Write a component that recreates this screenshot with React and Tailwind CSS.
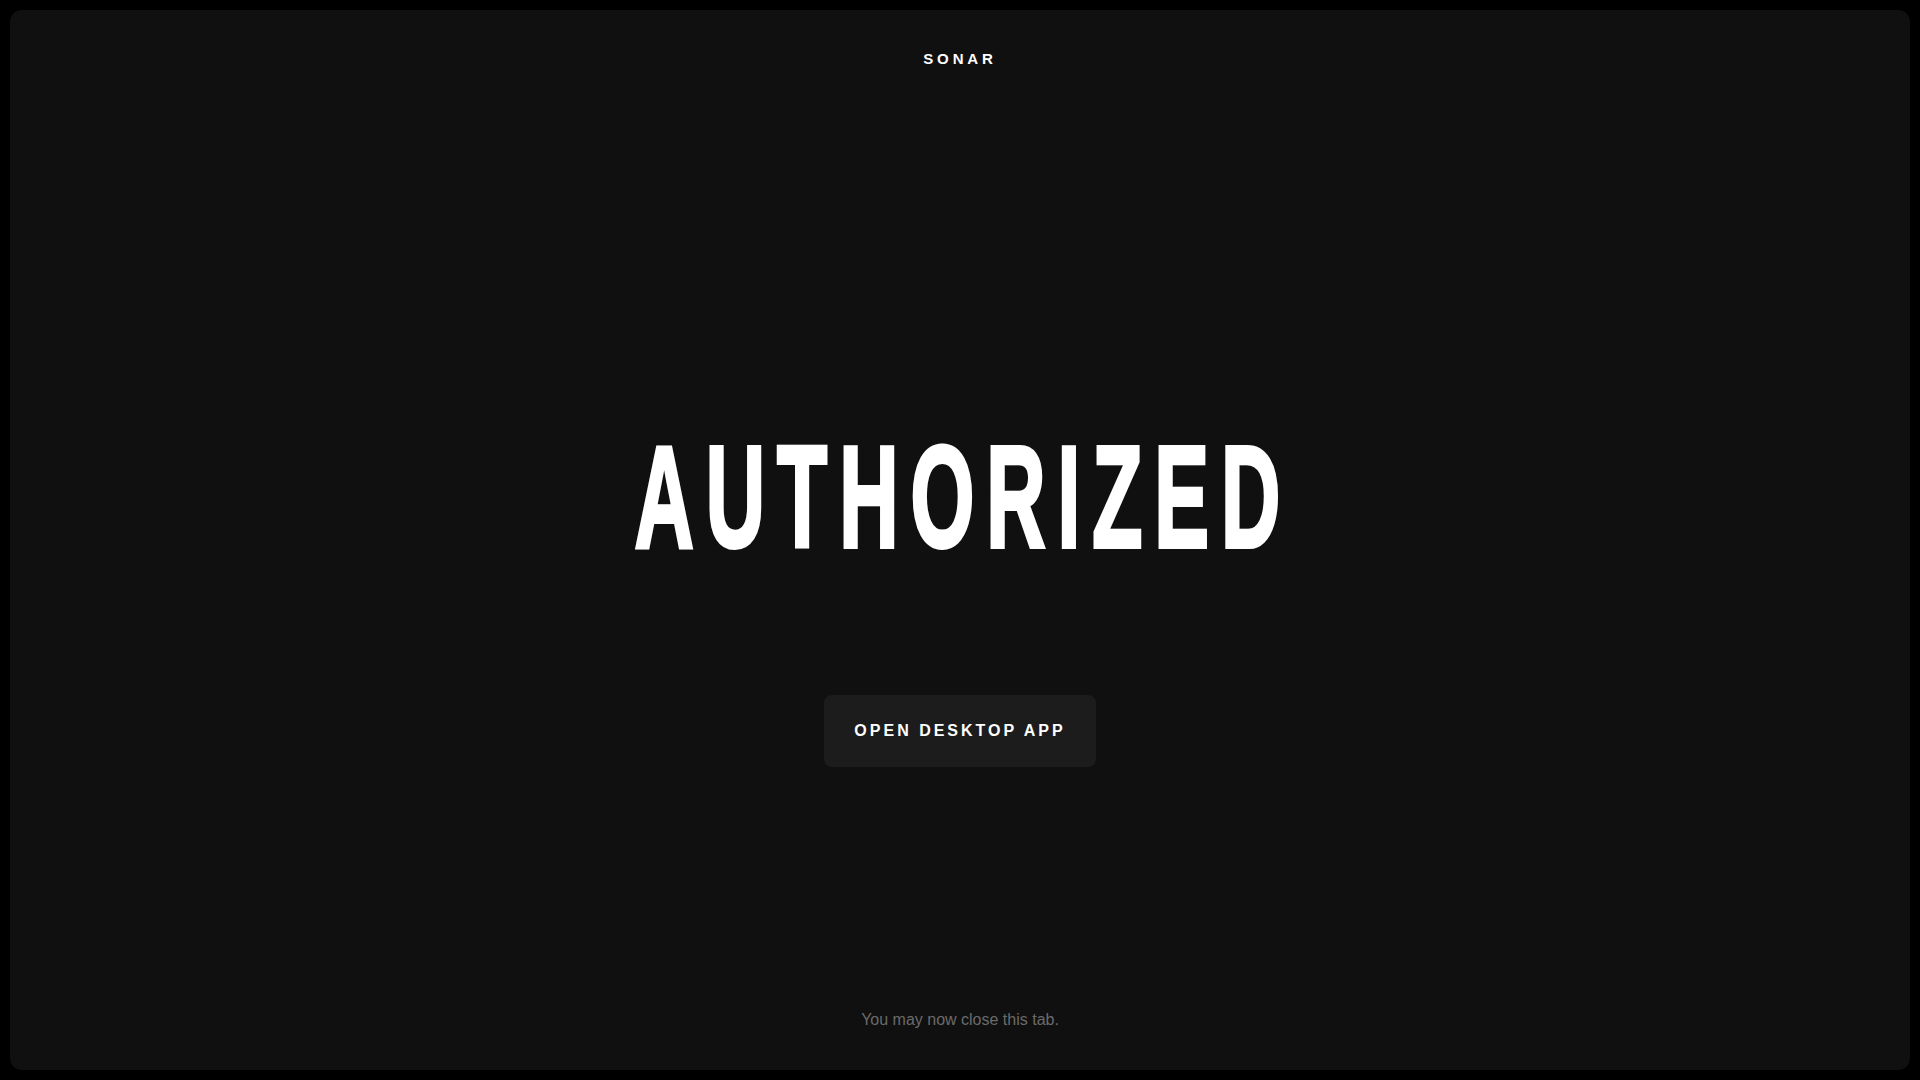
export default function App() {
  return (
    <div className="min-h-screen w-full bg-black p-[10px] font-['Liberation_Sans',Arial,sans-serif]">
      <div className="flex h-[1060px] flex-col rounded-[12px] bg-[#101010]">
        {/* Header */}
        <header className="pt-[37px] text-center">
          <span className="text-[15px] font-bold leading-6 tracking-[0.26em] text-white">
            SONAR
          </span>
        </header>

        {/* Main */}
        <main className="flex flex-col items-center pt-[355px]">
          <h1 className="w-full scale-x-[0.57] pl-[12px] text-center text-[144px] font-bold leading-none tracking-[21px] text-white [-webkit-text-stroke:4px_white]">
            AUTHORIZED
          </h1>
          <button
            type="button"
            className="mt-[125px] flex h-[72px] items-center rounded-[8px] bg-[#1c1c1c] px-[30px] text-[16px] font-bold tracking-[3px] text-white"
          >
            OPEN DESKTOP APP
          </button>
        </main>

        <div className="flex-1" />

        {/* Footer */}
        <footer className="pb-[38px] text-center text-[16px] leading-6 text-[#6b6b6b]">
          You may now close this tab.
        </footer>
      </div>
    </div>
  );
}
